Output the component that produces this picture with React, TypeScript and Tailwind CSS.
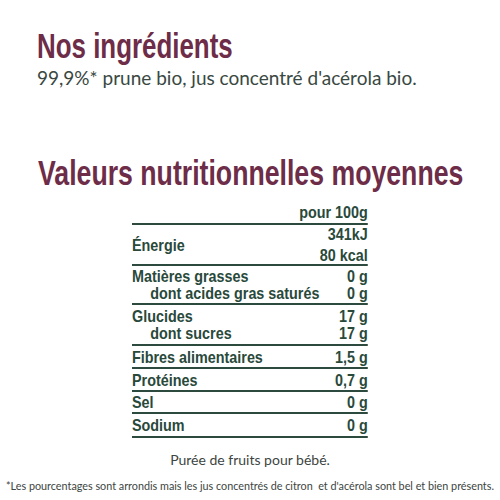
const head = "inline-block whitespace-nowrap origin-left font-['Liberation_Sans',Arial,sans-serif] font-bold text-[35px] leading-[40px] text-[#6d2c47]";
const line = "border-b-2 border-[#2c4a3d]";

const Row = ({ label, value, h }: { label: string; value: string; h: string }) => (
  <div className={`flex items-center justify-between ${line} ${h}`}>
    <span>{label}</span>
    <span>{value}</span>
  </div>
);

const Pair = ({ a, av, b, bv, h }: { a: string; av: string; b: string; bv: string; h: string }) => (
  <div className={`flex flex-col justify-center ${line} ${h} leading-[17px]`}>
    <div className="flex justify-between">
      <span>{a}</span>
      <span>{av}</span>
    </div>
    <div className="flex justify-between">
      <span className="pl-[21px]">{b}</span>
      <span>{bv}</span>
    </div>
  </div>
);

export default function App() {
  return (
    <div className="w-[500px] h-[500px] bg-white overflow-hidden flex flex-col">
      {/* Ingrédients */}
      <div className="pl-[37px] pt-[26px]">
        <h1 className="h-[40px]">
          <span className={`${head} scale-x-[0.74]`}>Nos ingrédients</span>
        </h1>
        <p className="font-['Lato',sans-serif] text-[19px] leading-[24px] text-[#394842]">
          99,9%* prune bio, jus concentré d'acérola bio.
        </p>
      </div>

      <h2 className="h-[40px] pl-[38px] mt-[63px]">
        <span className={`${head} scale-x-[0.762]`}>Valeurs nutritionnelles moyennes</span>
      </h2>

      {/* Tableau */}
      <div className="ml-[132px] w-[236px] mt-[5px]">
        <div className="w-[271px] origin-left scale-x-[0.87] font-['Liberation_Sans',Arial,sans-serif] font-bold text-[16.5px] leading-[18px] text-[#29493b]">
          <div className={`flex justify-end items-end ${line} h-[27px] pb-[2px]`}>pour 100g</div>
          <div className={`flex items-center justify-between ${line} h-[41px]`}>
            <span>Énergie</span>
            <div className="flex flex-col items-end gap-[3px]">
              <span>341kJ</span>
              <span>80 kcal</span>
            </div>
          </div>
          <Pair a="Matières grasses" av="0 g" b="dont acides gras saturés" bv="0 g" h="h-[39px]" />
          <Pair a="Glucides" av="17 g" b="dont sucres" bv="17 g" h="h-[41px]" />
          <Row label="Fibres alimentaires" value="1,5 g" h="h-[23px]" />
          <Row label="Protéines" value="0,7 g" h="h-[23px]" />
          <Row label="Sel" value="0 g" h="h-[22px]" />
          <Row label="Sodium" value="0 g" h="h-[24px]" />
        </div>
      </div>

      <p className="font-['Lato',sans-serif] text-[14px] leading-[18px] text-[#3c4541] text-center mt-[13px]">
        Purée de fruits pour bébé.
      </p>
      <p className="font-['Lato',sans-serif] text-[10.8px] leading-[14px] text-[#3c4541] text-center mt-[10px] whitespace-nowrap">
        *Les pourcentages sont arrondis mais les jus concentrés de citron&nbsp; et d'acérola sont bel et bien présents.
      </p>
    </div>
  );
}
